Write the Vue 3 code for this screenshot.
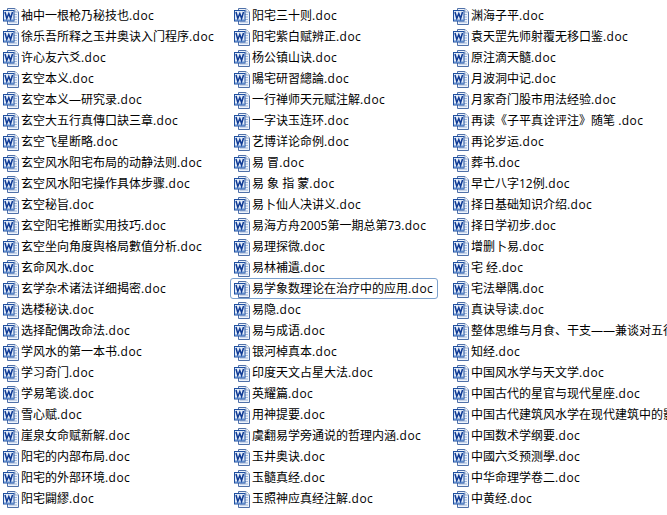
<script setup>
const columns = [
  [
    '袖中一根枪乃秘技也', '徐乐吾所释之玉井奥诀入门程序', '许心友六爻', '玄空本义',
    '玄空本义—研究录', '玄空大五行真傳口訣三章', '玄空飞星断略', '玄空风水阳宅布局的动静法则',
    '玄空风水阳宅操作具体步骤', '玄空秘旨', '玄空阳宅推断实用技巧', '玄空坐向角度舆格局數值分析',
    '玄命风水', '玄学杂术诸法详细揭密', '选楼秘诀', '选择配偶改命法',
    '学风水的第一本书', '学习奇门', '学易笔谈', '雪心赋',
    '崖泉女命赋新解', '阳宅的内部布局', '阳宅的外部环境', '阳宅闢繆',
  ],
  [
    '阳宅三十则', '阳宅紫白赋辨正', '杨公镇山诀', '陽宅研習總論',
    '一行禅师天元赋注解', '一字诀玉连环', '艺博详论命例', '易 冒',
    '易 象 指 蒙', '易卜仙人决讲义', '易海方舟2005第一期总第73', '易理探微',
    '易林補遺', '易学象数理论在治疗中的应用', '易隐', '易与成语',
    '银河棹真本', '印度天文占星大法', '英耀篇', '用神提要',
    '虞翻易学旁通说的哲理内涵', '玉井奥诀', '玉髓真经', '玉照神应真经注解',
  ],
  [
    '渊海子平', '袁天罡先师射覆无移口鉴', '原注滴天髓', '月波洞中记',
    '月家奇门股市用法经验', '再读《子平真诠评注》随笔 ', '再论岁运', '葬书',
    '早亡八字12例', '择日基础知识介绍', '择日学初步', '增删卜易',
    '宅 经', '宅法舉隅', '真诀导读', '整体思维与月食、干支——兼谈对五行的认识',
    '知经', '中国风水学与天文学', '中国古代的星官与现代星座', '中国古代建筑风水学在现代建筑中的影响',
    '中国数术学纲要', '中國六爻预测學', '中华命理学卷二', '中黄经',
  ],
]
const selected = '易学象数理论在治疗中的应用'
</script>

<template>
  <div class="page">
    <ul v-for="(col, c) in columns" :key="c" class="col">
      <li v-for="name in col" :key="name" class="row" :class="{ selected: name === selected }">
        <svg class="icon" width="16" height="18" viewBox="0 0 16 18">
          <path d="M4.5 1.5H12L15.5 5V17.5H4.5Z" fill="#eef3fb" stroke="#4f70a8" />
          <path d="M12 1.5V5H15.5" fill="#fff" stroke="#8ea5c9" />
          <path d="M11 7.5H14M11 10H14M11 12.5H14M6 15H14" stroke="#9fb6d8" />
          <rect x="0.5" y="3.5" width="10.5" height="10.5" fill="#e4edf9" stroke="#1f4f9f" />
          <rect x="1" y="12.5" width="9.5" height="1.5" fill="#5f8bcb" />
          <polyline points="2,5 3.8,11.5 5.8,6.5 7.6,11.5 9.5,5" fill="none" stroke="#0f3a94" stroke-width="1.5" />
        </svg>
        <span class="name">{{ name }}<span class="ext">.doc</span></span>
      </li>
    </ul>
  </div>
</template>

<style>
html, body { margin: 0; background: #fff; overflow: hidden; }
</style>

<style scoped>
.page {
  width: 667px;
  height: 515px;
  overflow: hidden;
  display: grid;
  grid-template-columns: 231px 219px 217px;
  padding-top: 5px;
  box-sizing: border-box;
  background: #fff;
  color: #000;
  font-family: "Open Sans", "Noto Sans CJK SC", sans-serif;
  font-size: 12px;
}
.col {
  list-style: none;
  margin: 0;
  padding: 0;
  min-width: 0;
}
.row {
  height: 21px;
  display: flex;
  align-items: center;
  padding-left: 3px;
  white-space: pre;
  box-sizing: border-box;
}
.icon {
  flex: none;
  margin-right: 2px;
}
.name {
  line-height: 21px;
}
.ext {
  letter-spacing: 0.45px;
}
.selected {
  position: relative;
}
.selected::before {
  content: "";
  position: absolute;
  left: -1px;
  top: 0;
  width: 208px;
  height: 21px;
  box-sizing: border-box;
  border: 1px solid #7da2ce;
  border-radius: 3px;
}
</style>
